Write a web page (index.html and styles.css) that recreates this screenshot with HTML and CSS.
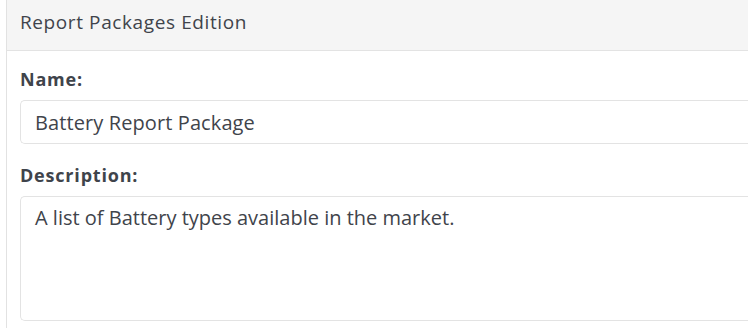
FILE: index.html
```html
<!DOCTYPE html>
<html lang="en">

<head>
  <meta charset="UTF-8">
  <meta name="viewport" content="width=device-width, initial-scale=1.0">
  <title>Report Packages Edition</title>
  <link rel="stylesheet" href="styles.css">
</head>
<body>
  <!-- 패널 -->
  <div class="panel">
    <div class="panel-heading">Report Packages Edition</div>
    <form class="panel-body" id="packageForm">
      <label for="name">Name:</label>
      <input type="text" id="name" name="name" value="Battery Report Package">

      <label for="description">Description:</label>
      <textarea id="description" name="description">A list of Battery types available in the market.</textarea>
    </form>
  </div>
</body>

</html>
```

FILE: styles.css
```css
/* 공통 스타일 */
body {
  font-family: 'Open Sans', 'Lato', sans-serif;
  margin: 0;
  padding: 0;
  height: 328px;
  color: #3f444b;
  background-color: #fff;
  overflow: hidden;
}

/* 패널 (오른쪽은 화면 밖으로 이어짐) */
.panel {
  margin-left: 6px;
  height: 100%;
  border-left: 1px solid #e2e2e2;
}

.panel-heading {
  background-color: #f5f5f5;
  border-bottom: 1px solid #e3e3e3;
  height: 50px;
  padding-left: 13px;
  font-size: 19px;
  letter-spacing: 0.6px;
  line-height: 44px;
}

.panel-body {
  padding: 18px 0 0 13px;
}

label {
  display: block;
  font-weight: 700;
  font-size: 18px;
  letter-spacing: 0.8px;
  line-height: 20px;
  margin-bottom: 11px;
}

input[type="text"],
textarea {
  display: block;
  box-sizing: border-box;
  width: 100%;
  margin: 0 0 21px;
  padding: 0 14px;
  border: 1px solid #e3e3e3;
  border-right: none;
  border-radius: 5px 0 0 5px;
  font-family: inherit;
  font-size: 20px;
  color: #3f444b;
  background-color: #fff;
}

input[type="text"] {
  height: 44px;
  letter-spacing: 0.1px;
}

textarea {
  height: 125px;
  padding-top: 7px;
  resize: none;
}
```
